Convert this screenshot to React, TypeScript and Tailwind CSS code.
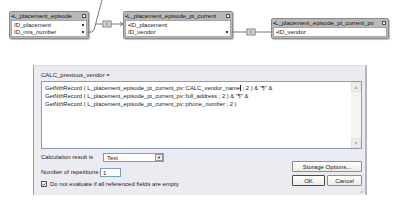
import React from 'react';

const font = { fontFamily: '"Liberation Sans", Arial, sans-serif' };

interface TableBoxProps {
    name: string;
    rows: { label: string; lead?: boolean; key?: boolean }[];
    className: string;
}

// Table occurrence node on the relationship graph
function TableBox({ name, rows, className }: TableBoxProps) {
    return (
        <div className={`absolute rounded-[2px] border border-[#8a8a8a] bg-[#b9b9b9] shadow-[1px_1px_1px_rgba(0,0,0,0.25)] ${className}`}>
            <div className="flex h-[8px] items-center justify-between whitespace-nowrap pl-[1px] pr-[2px] text-[6px] leading-none text-[#111]">
                <span>•{name}</span>
                <span className="h-[4px] w-[4px] border border-[#555] bg-[#eee]" />
            </div>
            <div className="mx-[1px] mb-[1px] border border-[#a6a6a6] bg-white pb-[1px]">
                {rows.map((r) => (
                    <div key={r.label} className="flex h-[7px] items-center justify-between whitespace-nowrap pl-[2px] pr-[2px] text-[6px] leading-none text-[#222]">
                        <span>{r.lead ? '•' : ''}{r.label}</span>
                        {r.key && <span className="h-[2px] w-[2px] bg-[#333]" />}
                    </div>
                ))}
            </div>
        </div>
    );
}

function XpButton({ children, primary, className = '' }: { children: React.ReactNode; primary?: boolean; className?: string }) {
    return (
        <button
            className={`flex h-[11px] items-center justify-center whitespace-nowrap rounded-[1px] border bg-gradient-to-b from-white to-[#ecebe6] text-[6px] leading-none text-[#222] ${primary ? 'border-[#4a4a4a]' : 'border-[#8d8d8d]'} ${className}`}
        >
            {children}
        </button>
    );
}

export default function App() {
    return (
        <div className="relative h-[203px] w-[399px] overflow-hidden bg-white" style={font}>
            {/* relationship graph */}
            <div className="relative h-[65px]">
                <svg className="absolute inset-0" width="399" height="65" viewBox="0 0 399 65">
                    <g fill="none" stroke="#555" strokeWidth="0.8">
                        <polyline points="88,32 92,32 94,30 102,0" />
                        <line x1="96" y1="24" x2="103" y2="24" />
                        <rect x="103" y="21" width="8" height="6" fill="#fff" />
                        <line x1="104.5" y1="23" x2="109.5" y2="23" />
                        <line x1="104.5" y1="25" x2="109.5" y2="25" />
                        <line x1="111" y1="24" x2="123" y2="24" />
                        <polyline points="120,22 123,24 120,26" />
                        <line x1="232" y1="32" x2="247" y2="32" />
                        <rect x="247" y="29" width="8" height="6" fill="#fff" />
                        <line x1="248.5" y1="31" x2="253.5" y2="31" />
                        <line x1="248.5" y1="33" x2="253.5" y2="33" />
                        <line x1="255" y1="32" x2="271" y2="32" />
                    </g>
                </svg>
                <TableBox
                    name="L_placement_episode"
                    className="left-[9px] top-[11px] w-[80px]"
                    rows={[
                        { label: 'ID_placement', key: true },
                        { label: 'ID_mis_number', key: true },
                    ]}
                />
                <TableBox
                    name="L_placement_episode_pt_current"
                    className="left-[123px] top-[11px] w-[110px]"
                    rows={[
                        { label: 'ID_placement', lead: true },
                        { label: 'ID_vendor', key: true },
                    ]}
                />
                <TableBox
                    name="L_placement_episode_pt_current_pv"
                    className="left-[271px] top-[18px] w-[118px]"
                    rows={[{ label: 'ID_vendor', lead: true }]}
                />
            </div>

            {/* calculation dialog */}
            <div className="relative ml-[33px] h-[130px] w-[334px] border-l border-t border-r-2 border-l-[#9c9ca6] border-t-[#dcdce4] border-r-[#b4b4c2] bg-[#ecebf1] pl-[7px] pr-[3px] pt-[4px]">
                <div className="h-[10px] whitespace-nowrap text-[6px] leading-[10px] text-[#222]">CALC_previous_vendor =</div>
                <div className="mt-[1px] flex h-[68px] border border-[#8c9fb9] bg-white">
                    <div className="flex-1 whitespace-nowrap pl-[3px] pt-[2px] text-[5.8px] leading-[8px] text-[#222]">
                        <div>GetNthRecord ( L_placement_episode_pt_current_pv::CALC_vendor_name<span className="border-r border-[#222]" /> ; 2 ) &amp; "¶" &amp;</div>
                        <div>GetNthRecord ( L_placement_episode_pt_current_pv::full_address ; 2 ) &amp; "¶" &amp;</div>
                        <div>GetNthRecord ( L_placement_episode_pt_current_pv::phone_number ; 2 )</div>
                    </div>
                    <div className="flex w-[10px] flex-col justify-between bg-[#f4f4f2]">
                        <div className="flex h-[10px] items-center justify-center border border-[#e2e2dc] bg-[#eeeee8] text-[5px] leading-none text-[#b0b0a8]">▲</div>
                        <div className="flex h-[10px] items-center justify-center border border-[#e2e2dc] bg-[#eeeee8] text-[5px] leading-none text-[#b0b0a8]">▼</div>
                    </div>
                </div>

                <div className="mt-[3px] flex justify-between whitespace-nowrap text-[6px] text-[#222]">
                    <div className="flex flex-col">
                        <div className="flex h-[11px] items-center">
                            <span className="w-[62px]">Calculation result is</span>
                            <div className="flex h-[9px] w-[61px] items-center border border-[#7f9db9] bg-white pl-[3px]">
                                <span className="flex-1 leading-none">Text</span>
                                <span className="flex h-[7px] w-[8px] items-center justify-center border border-[#999] bg-[#ecebe6] text-[4px] leading-none">▼</span>
                            </div>
                        </div>
                        <div className="mt-[4px] flex h-[11px] items-center">
                            <span className="w-[59px]">Number of repetitions:</span>
                            <div className="flex h-[9px] w-[21px] items-center border border-[#7f9db9] bg-white pl-[2px] leading-none">1</div>
                        </div>
                        <div className="mt-[1px] flex h-[10px] items-center gap-[3px]">
                            <span className="flex h-[6px] w-[6px] items-center justify-center border border-[#555] bg-white">
                                <svg width="5" height="5" viewBox="0 0 5 5">
                                    <polyline points="0.8,2.4 2,3.6 4.3,1" fill="none" stroke="#111" strokeWidth="1" />
                                </svg>
                            </span>
                            <span className="leading-none">Do not evaluate if all referenced fields are empty</span>
                        </div>
                    </div>
                    <div className="mt-[9px] flex w-[70px] flex-col gap-[3px]">
                        <XpButton className="w-[70px]">Storage Options...</XpButton>
                        <div className="flex gap-[2px]">
                            <XpButton primary className="w-[33px]">OK</XpButton>
                            <XpButton className="w-[35px]">Cancel</XpButton>
                        </div>
                    </div>
                </div>

                {/* resize grip */}
                <svg className="absolute bottom-[1px] right-[1px]" width="5" height="5" viewBox="0 0 5 5">
                    <g stroke="#a8a8b0" strokeWidth="0.7">
                        <line x1="4.5" y1="0.5" x2="0.5" y2="4.5" />
                        <line x1="4.5" y1="2.5" x2="2.5" y2="4.5" />
                    </g>
                </svg>
            </div>
        </div>
    );
}
